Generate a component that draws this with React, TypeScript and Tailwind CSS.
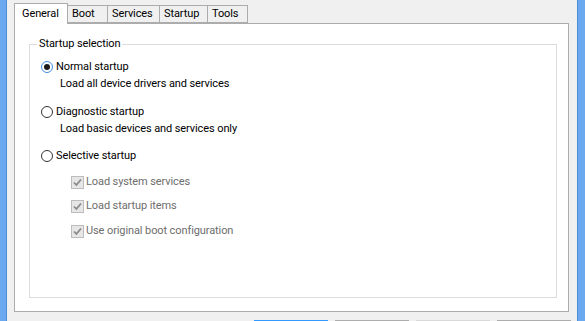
import React from "react";

function Radio({ checked }: { checked?: boolean }) {
  return (
    <span
      className={
        "w-[12px] h-[12px] rounded-full border bg-white flex items-center justify-center shrink-0 " +
        (checked ? "border-[#3e8de0]" : "border-[#333333]")
      }
    >
      {checked && <span className="w-[6px] h-[6px] rounded-full bg-[#1b1b1b]" />}
    </span>
  );
}

function Check() {
  return (
    <span className="w-[13px] h-[13px] border border-[#bcbcbc] bg-[#e6e6e6] flex items-center justify-center shrink-0">
      <svg width="9" height="9" viewBox="0 0 9 9">
        <path d="M1 4.5 L3.4 7 L8 1.5" fill="none" stroke="#8a8a8a" strokeWidth="1.8" />
      </svg>
    </span>
  );
}

export default function App() {
  const tabs = ["General", "Boot", "Services", "Startup", "Tools"];
  const widths = ["w-[54px]", "w-[40px]", "w-[52px]", "w-[48px]", "w-[40px]"];
  return (
    <div className="w-[585px] h-[321px] bg-[#f0f0f0] flex overflow-hidden text-[11px] tracking-[-0.1px] text-black font-['Roboto',sans-serif]">
      <div className="w-[7px] shrink-0 h-full bg-[#6aa8f0] border-r border-[#4d8bd6]" />
      <div className="w-[570px] shrink-0 flex flex-col pl-[7px] pr-[8px] pt-[3px]">
        <div className="flex h-[20px] items-end relative z-10">
          {tabs.map((t, i) =>
            i === 0 ? (
              <div
                key={t}
                className={`${widths[i]} h-[21px] -mb-[1px] bg-white border border-b-0 border-[#acacac] pl-[7px] pt-[3px] leading-[14px]`}
              >
                {t}
              </div>
            ) : (
              <div
                key={t}
                className={`${widths[i]} h-[18px] bg-[#f0f0f0] border border-l-0 border-[#acacac] pl-[4px] pt-[1px] leading-[14px]`}
              >
                {t}
              </div>
            )
          )}
        </div>
        <div className="w-[555px] h-[289px] shrink-0 bg-white border border-[#acacac] flex flex-col pl-[14px] pr-[11px] pt-[20px] pb-[13px]">
          <div className="flex-1 border border-[#dcdcdc] relative flex flex-col pl-[11px]">
            <span className="absolute left-[7px] -top-[9px] bg-white px-[2px] leading-[16px]">
              Startup selection
            </span>
            <div className="mt-[14px] flex items-center gap-[3px] h-[16px]">
              <Radio checked />
              <span className="leading-[16px]">Normal startup</span>
            </div>
            <div className="mt-[1px] pl-[19px] h-[16px] leading-[16px]">
              Load all device drivers and services
            </div>
            <div className="mt-[12px] flex items-center gap-[3px] h-[16px]">
              <Radio />
              <span className="leading-[16px]">Diagnostic startup</span>
            </div>
            <div className="mt-[1px] pl-[19px] h-[16px] leading-[16px]">
              Load basic devices and services only
            </div>
            <div className="mt-[11px] flex items-center gap-[3px] h-[16px]">
              <Radio />
              <span className="leading-[16px]">Selective startup</span>
            </div>
            <div className="flex flex-col pl-[30px] text-[#6d6d6d]">
              <div className="mt-[10px] flex items-center gap-[2px] h-[16px]">
                <Check />
                <span className="leading-[16px]">Load system services</span>
              </div>
              <div className="mt-[8px] flex items-center gap-[2px] h-[16px]">
                <Check />
                <span className="leading-[16px]">Load startup items</span>
              </div>
              <div className="mt-[9px] flex items-center gap-[2px] h-[16px]">
                <Check />
                <span className="leading-[16px]">Use original boot configuration</span>
              </div>
            </div>
          </div>
        </div>
        <div className="mt-[8px] flex justify-end gap-[7px] -mr-[2px]">
          <div className="w-[74px] h-[23px] shrink-0 border border-[#3399ff] bg-[#e5e5e5]" />
          <div className="w-[74px] h-[23px] shrink-0 border border-[#adadad] bg-[#e5e5e5]" />
          <div className="w-[74px] h-[23px] shrink-0 border border-[#d9d9d9] bg-[#f0f0f0]" />
          <div className="w-[74px] h-[23px] shrink-0 border border-[#adadad] bg-[#e5e5e5]" />
        </div>
      </div>
      <div className="w-[8px] shrink-0 h-full bg-[#6aa8f0] border-l border-[#4d8bd6]" />
    </div>
  );
}
